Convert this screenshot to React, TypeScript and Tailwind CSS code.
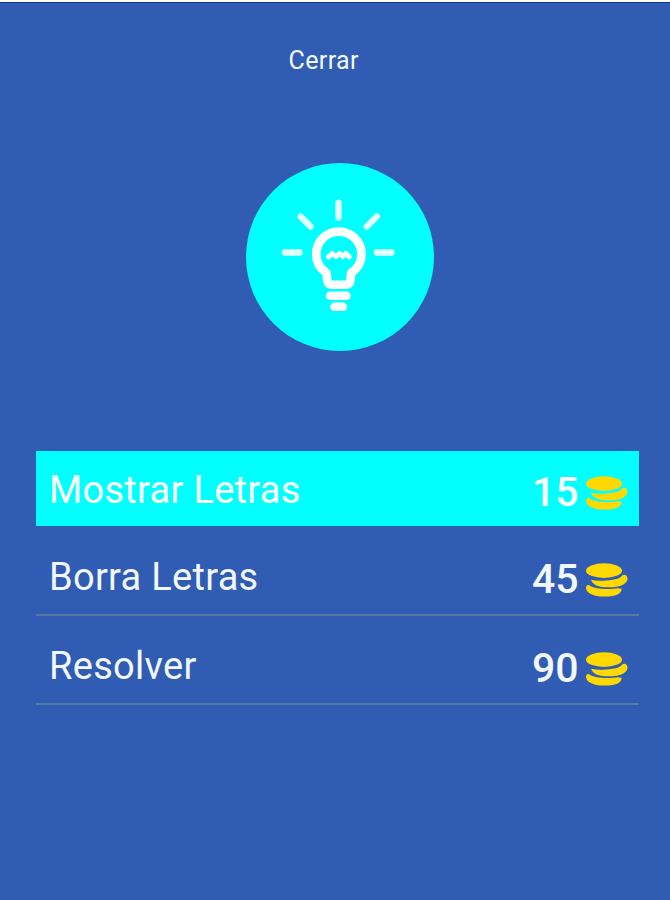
const HINTS = [
  { label: "Mostrar Letras", price: 15, selected: true },
  { label: "Borra Letras", price: 45, selected: false },
  { label: "Resolver", price: 90, selected: false },
];

function BulbIcon() {
  return (
    <svg className="size-[188px]" viewBox="17 22 565 565" fill="none" stroke="#fff" strokeLinecap="round" strokeLinejoin="round">
      <circle cx="299.5" cy="304.5" r="282.5" fill="#00ffff" stroke="none" />
      <g stroke="#e2ffff" strokeWidth="19">
        <path d="M295 141v45M181 183l30 30M410 183l-30 30M134 291h44M410 291h44" />
      </g>
      <path strokeWidth="26" d="M261 374L259 352C241 340 228 320 228 296A68 68 0 0 1 364 296C364 320 351 340 333 352L331 374Q328 388 317 388H275Q264 388 261 374Z" />
      <path strokeWidth="15" d="M265 304L276 294L288 303L298 294L308 303L317 294L327 304" />
      <path strokeWidth="26" d="M270 421h49M283 454h25" />
    </svg>
  );
}

function CoinsIcon() {
  return (
    <svg className="h-[34px] w-[42px]" viewBox="0 0 126 102" fill="#ffd800">
      <ellipse cx="54" cy="23" rx="54" ry="22" />
      <path d="M15 50Q28 53 43 53Q67 54 88 49Q103 45 108 38Q112 33 119 36Q126 41 124 51Q119 67 92 71Q70 75 44 71Q20 66 15 50Z" />
      <path d="M0 76Q0 65 8 66Q16 73 33 76Q55 80 83 77Q96 75 107 77Q107 94 83 98Q57 103 28 98Q2 92 0 76Z" />
    </svg>
  );
}

export default function App() {
  return (
    <main className="flex h-[900px] w-[670px] flex-col border-t-2 border-white bg-[#305cb3] font-['Roboto',sans-serif] text-[#f2f8ff]">
      <div className="h-px w-full shrink-0 bg-[#0c37a0]" />
      <button className="mt-[43px] ml-[288.5px] h-[30px] w-fit text-[25px] leading-[30px] tracking-[0.4px]">
        Cerrar
      </button>

      <div className="mt-[86.5px] ml-[245.5px]">
        <BulbIcon />
      </div>

      <ul className="mt-[100.5px] ml-9 flex w-[603px] flex-col">
        {HINTS.map((hint) => (
          <li
            key={hint.label}
            className={`flex justify-between pr-[11.5px] pl-[13px] ${
              hint.selected ? "mb-[14px] h-[75px] bg-[#00ffff] pt-[2px] text-white" : "mb-[13px] h-[76px] border-b-2 border-[#557ba3]"
            }`}
          >
            <span className="pt-[14px] text-[38px] leading-[46px] tracking-[0.3px]">{hint.label}</span>
            <span className="flex items-start">
              <span className="pt-[14px] text-[41px] leading-[50px] font-medium">{hint.price}</span>
              <span className="mt-[23px] ml-[7px]">
                <CoinsIcon />
              </span>
            </span>
          </li>
        ))}
      </ul>
    </main>
  );
}
